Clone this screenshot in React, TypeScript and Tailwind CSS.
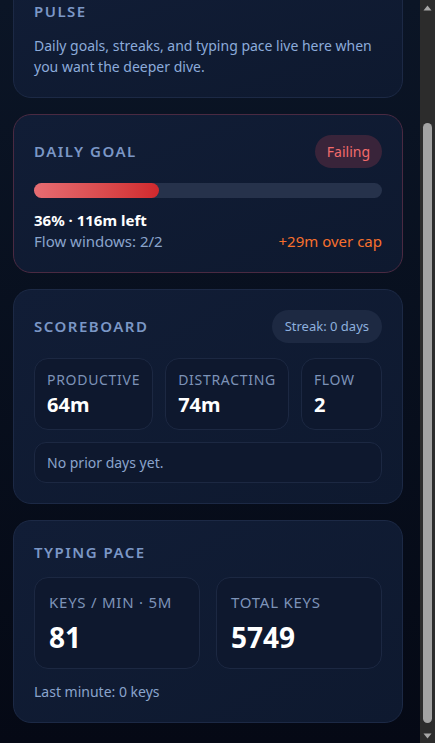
import { useEffect, useRef } from 'react';

const stats = [
  { label: 'Productive', value: '64m' },
  { label: 'Distracting', value: '74m' },
  { label: 'Flow', value: '2' },
];

function Card({ children, danger = false }: { children: React.ReactNode; danger?: boolean }) {
  return (
    <section
      className={`rounded-[18px] border bg-gradient-to-br from-[#111d36] to-[#0e192f] p-5 ${
        danger ? 'border-[#4a2a42]' : 'border-[#1c2945]'
      }`}
    >
      {children}
    </section>
  );
}

function Title({ children }: { children: React.ReactNode }) {
  return (
    <h2 className="text-[15px] font-semibold uppercase leading-[23px] tracking-[0.1em] text-[#7b97c6]">
      {children}
    </h2>
  );
}

// windows-style dark scrollbar, the panel is scrolled to the bottom
function Scrollbar() {
  return (
    <div className="flex w-[15px] shrink-0 flex-col bg-[#2c2c2c]">
      <div className="flex h-[15px] items-center justify-center">
        <svg width="9" height="6" viewBox="0 0 9 6">
          <path d="M4.5 0.5 L8.5 5.5 L0.5 5.5 Z" fill="#a8a8a8" />
        </svg>
      </div>
      <div className="flex flex-1 flex-col px-[3px] pb-[5px] pt-[108px]">
        <div className="flex-1 rounded-full bg-[#a3a3a3]" />
      </div>
      <div className="flex h-[15px] items-center justify-center">
        <svg width="9" height="6" viewBox="0 0 9 6">
          <path d="M0.5 0.5 L8.5 0.5 L4.5 5.5 Z" fill="#a8a8a8" />
        </svg>
      </div>
    </div>
  );
}

export default function App() {
  const scrollRef = useRef<HTMLDivElement>(null);

  useEffect(() => {
    const el = scrollRef.current;
    if (el) el.scrollTop = el.scrollHeight;
  }, []);

  return (
    <div className="flex h-screen bg-gradient-to-b from-[#0b1526] to-[#050915] font-['Noto_Sans',sans-serif]">
      <div ref={scrollRef} className="min-w-0 flex-1 overflow-y-auto">
        <div className="flex flex-col gap-4 pb-5 pl-[13px] pr-[17px] pt-5">
          <Card>
            <Title>Pulse</Title>
            <p className="mt-3 text-[14px] leading-[21px] text-[#8cabda]">
              Daily goals, streaks, and typing pace live here when you want the deeper dive.
            </p>
          </Card>

          <Card danger>
            <div className="flex h-[33px] items-center justify-between">
              <Title>Daily goal</Title>
              <span className="flex h-[33px] items-center rounded-full bg-[#39243a] px-3 text-[14px] text-[#f26b6b]">
                Failing
              </span>
            </div>
            <div className="mt-[15px] h-[15px] rounded-full bg-[#26324b]">
              <div className="h-full w-[36%] rounded-full bg-gradient-to-r from-[#e66c72] to-[#d0282d]" />
            </div>
            <div className="mt-3 text-[15px] font-bold leading-[21px] text-white">36% · 116m left</div>
            <div className="flex items-center justify-between text-[15px] leading-[21px]">
              <span className="text-[#8aa4cc]">Flow windows: 2/2</span>
              <span className="text-[#f7702d]">+29m over cap</span>
            </div>
          </Card>

          <Card>
            <div className="flex h-[33px] items-center justify-between">
              <Title>Scoreboard</Title>
              <span className="flex h-[33px] items-center rounded-full bg-[#1d2942] px-[13px] text-[13px] text-[#8db0de]">
                Streak: 0 days
              </span>
            </div>
            <div className="mt-[15px] flex gap-3">
              {stats.map((s, i) => (
                <div
                  key={s.label}
                  className={`rounded-[14px] border border-[#1c2842] bg-[#0e182e] px-3 pb-3 pt-3 ${
                    i === stats.length - 1 ? 'flex-1' : 'shrink-0'
                  }`}
                >
                  <div className="text-[14px] uppercase leading-[18px] tracking-[0.05em] text-[#7d93b8]">
                    {s.label}
                  </div>
                  <div className="mt-1 text-[20px] font-bold leading-[24px] text-white">{s.value}</div>
                </div>
              ))}
            </div>
            <div className="mt-3 rounded-[12px] border border-[#1c2842] bg-[#0e182e] px-3 py-[10px] text-[14px] leading-[19px] text-[#8aa4cc]">
              No prior days yet.
            </div>
          </Card>

          <Card>
            <Title>Typing pace</Title>
            <div className="mt-[13px] grid grid-cols-2 gap-4">
              <div className="rounded-[14px] border border-[#1c2842] bg-[#0e182e] px-[14px] py-[14px]">
                <div className="text-[15px] uppercase leading-[20px] tracking-[0.05em] text-[#7d93b8]">
                  Keys / min · 5m
                </div>
                <div className="mt-2 text-[28px] font-bold leading-[34px] text-white">81</div>
              </div>
              <div className="rounded-[14px] border border-[#1c2842] bg-[#0e182e] px-[14px] py-[14px]">
                <div className="text-[15px] uppercase leading-[20px] tracking-[0.05em] text-[#7d93b8]">
                  Total keys
                </div>
                <div className="mt-2 text-[28px] font-bold leading-[34px] text-white">5749</div>
              </div>
            </div>
            <div className="mt-[13px] text-[14px] leading-[20px] text-[#8aa4cc]">Last minute: 0 keys</div>
          </Card>
        </div>
      </div>
      <Scrollbar />
    </div>
  );
}
